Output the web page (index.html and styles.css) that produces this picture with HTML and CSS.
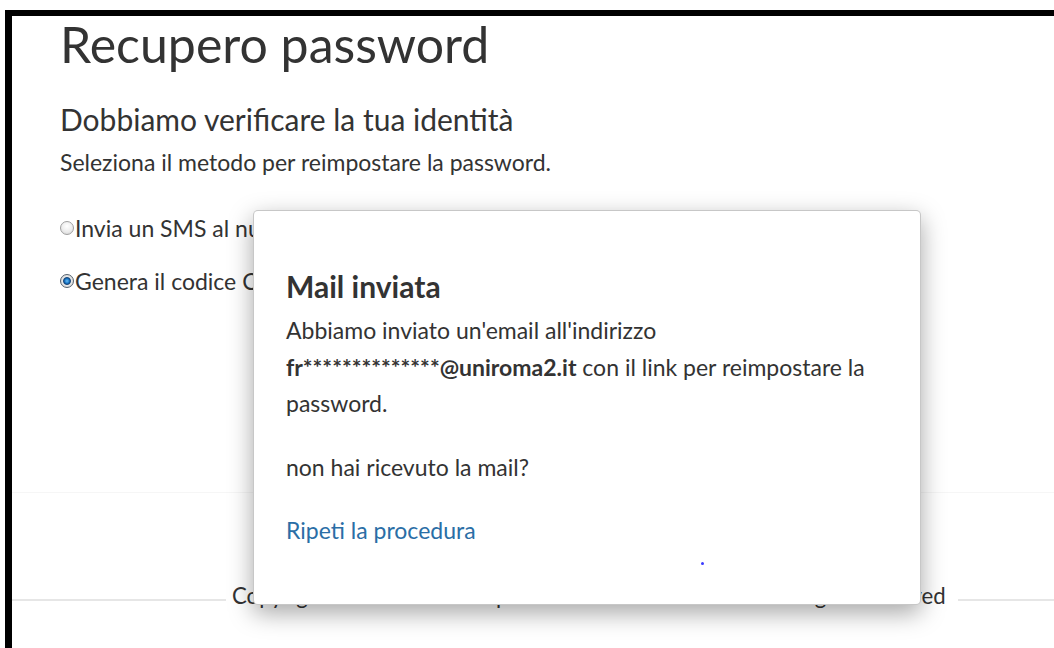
FILE: index.html
```html
<!DOCTYPE html>
<html lang="it">
<head>
<meta charset="utf-8">
<title>Recupero password</title>
<link rel="stylesheet" href="styles.css">
</head>
<body>
<div class="frame">
  <main class="content">
    <h1 class="title">Recupero password</h1>
    <h2 class="subtitle">Dobbiamo verificare la tua identità</h2>
    <p class="lead">Seleziona il metodo per reimpostare la password.</p>
    <form class="methods">
      <label class="method"><input type="radio" name="method" class="radio">Invia un SMS al numero di cellulare</label>
      <label class="method"><input type="radio" name="method" class="radio" checked>Genera il codice OTP e invialo per email</label>
    </form>
  </main>
  <footer class="footer">
    <div class="footer-rule"><span class="copyright">Copyright © 2020 Aruba S.p.A. - P.IVA 01573850516 - All rights reserved</span></div>
  </footer>
</div>

<div class="modal" role="dialog">
  <h3 class="modal-title">Mail inviata</h3>
  <p class="modal-text">Abbiamo inviato un'email all'indirizzo<br><strong>fr**************@uniroma2.it</strong> con il link per reimpostare la<br>password.</p>
  <p class="modal-text modal-question">non hai ricevuto la mail?</p>
  <p class="modal-text modal-link"><a href="#">Ripeti la procedura</a></p>
  <span class="loader-dot"></span>
</div>
</body>
</html>
```

FILE: styles.css
```css
html, body {
  margin: 0;
  padding: 0;
  height: 100%;
  background: #fff;
}

body {
  font-family: Lato, "Open Sans", sans-serif;
  color: #333;
  overflow: hidden;
}

.frame {
  margin: 10px 0 0 5px;
  height: calc(100% - 10px);
  border-left: 7px solid #000;
  border-top: 6px solid #000;
  box-sizing: border-box;
  display: flex;
  flex-direction: column;
}

.content {
  padding: 0 0 0 48px;
  height: 477px;
  flex: none;
  box-sizing: border-box;
  border-bottom: 1px solid #f6f6f6;
}

.title {
  margin: 0;
  font-size: 50px;
  font-weight: 400;
  line-height: 56px;
}

.subtitle {
  margin: 29px 0 0;
  font-size: 30px;
  font-weight: 400;
  line-height: 36px;
}

.lead {
  margin: 10px 0 0;
  font-size: 23px;
  line-height: 30px;
}

.methods {
  margin-top: 36px;
  display: flex;
  flex-direction: column;
  gap: 23px;
}

.method {
  display: flex;
  align-items: center;
  font-size: 23px;
  line-height: 30px;
}

.radio {
  appearance: none;
  -webkit-appearance: none;
  margin: 0 1px 0 0;
  width: 14px;
  height: 14px;
  border-radius: 50%;
  border: 1px solid #a0a0a0;
  background: radial-gradient(circle at 50% 35%, #fff 0, #ececec 55%, #cfcfcf 100%);
  box-sizing: border-box;
  flex: none;
}

.radio:checked {
  border-color: #56626e;
  background: radial-gradient(circle at 50% 50%, #6cc0f3 0, #1a78c9 26%, #0c3d73 40%, #e8e8e8 52%, #c9c9c9 100%);
}

.footer {
  flex: 1;
  padding-top: 88px;
}

.footer-rule {
  display: flex;
  align-items: center;
  gap: 6px;
}

.footer-rule::before,
.footer-rule::after {
  content: "";
  height: 2px;
  background: #e6e6e6;
}

.footer-rule::before {
  width: 214px;
  flex: none;
}

.footer-rule::after {
  flex: 1;
  margin-left: 6px;
}

.copyright {
  font-size: 22.2px;
  line-height: 30px;
  padding-bottom: 8px;
  white-space: nowrap;
}

/* dialog shown over the page */
.modal {
  position: absolute;
  left: 253px;
  top: 210px;
  width: 668px;
  height: 395px;
  box-sizing: border-box;
  padding: 57px 32px 0;
  background: #fff;
  border: 1px solid rgba(0, 0, 0, 0.22);
  border-radius: 5px;
  box-shadow: 0 8px 24px rgba(0, 0, 0, 0.35);
}

.modal-title {
  margin: 0;
  font-size: 30px;
  font-weight: 700;
  line-height: 36px;
  color: #333;
}

.modal-text {
  margin: 0;
  font-size: 23px;
  line-height: 36.5px;
}

.modal-text strong {
  font-weight: 700;
}

.modal-title + .modal-text {
  margin-top: 8px;
}

.modal-question {
  margin-top: 27.5px;
}

.modal-link {
  margin-top: 26.5px;
}

.modal-link a {
  color: #2a6ea6;
  text-decoration: none;
}

.loader-dot {
  position: absolute;
  left: 447px;
  top: 351px;
  width: 3px;
  height: 3px;
  border-radius: 50%;
  background: #3b3bff;
}
```
